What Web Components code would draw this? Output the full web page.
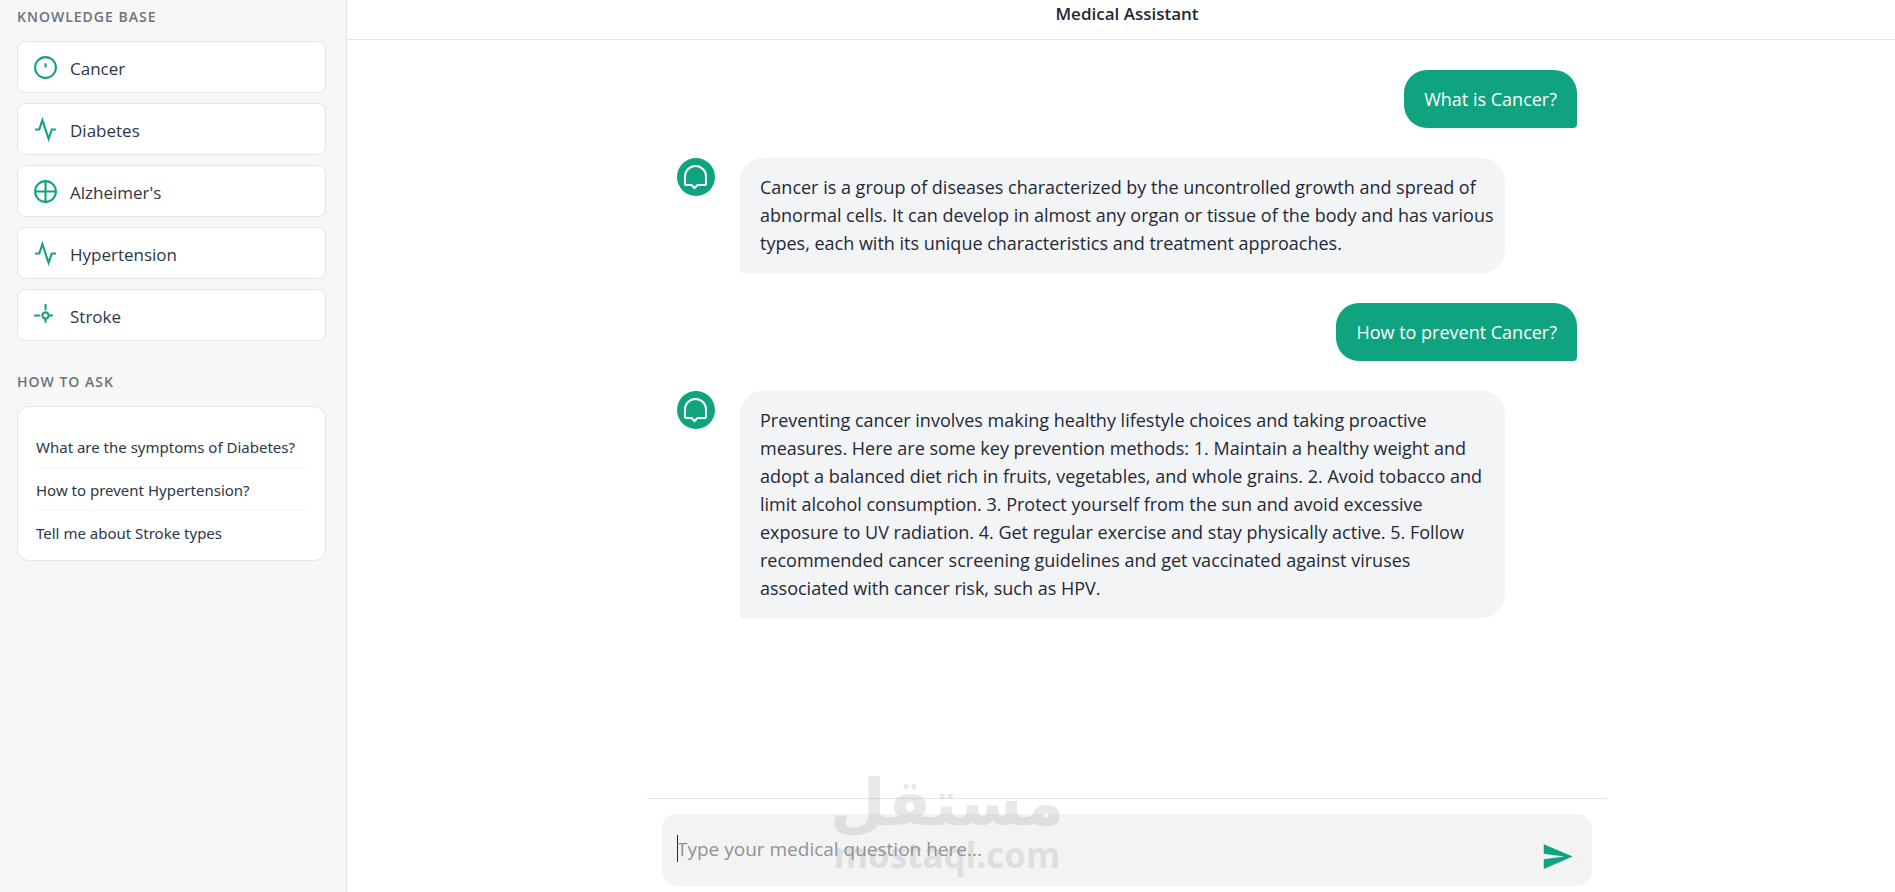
<!DOCTYPE html>
<html lang="en">
<head>
<meta charset="utf-8">
<meta name="viewport" content="width=device-width, initial-scale=1">
<title>Medical Assistant</title>
<style>
  :root {
    --accent: #10a37f;
    --line: #e5e5e5;
    --ink: #1f2937;
    --ink-soft: #2d3748;
    --muted: #6b7280;
  }

  body {
    margin: 0;
    color: var(--ink);
    font-family: "Segoe UI", "Open Sans", "Noto Sans", sans-serif;
  }
</style>
</head>
<body>
<medical-app>
  <side-bar slot="sidebar">
    <side-section heading="Knowledge Base">
      <topic-button icon="circle">Cancer</topic-button>
      <topic-button icon="pulse">Diabetes</topic-button>
      <topic-button icon="globe">Alzheimer's</topic-button>
      <topic-button icon="pulse">Hypertension</topic-button>
      <topic-button icon="node">Stroke</topic-button>
    </side-section>
    <side-section heading="How to Ask">
      <example-list>
        <example-question>What are the symptoms of Diabetes?</example-question>
        <example-question>How to prevent Hypertension?</example-question>
        <example-question>Tell me about Stroke types</example-question>
      </example-list>
    </side-section>
  </side-bar>

  <chat-header slot="header">Medical Assistant</chat-header>

  <chat-message from="user">What is Cancer?</chat-message>
  <chat-message from="assistant">Cancer is a group of diseases characterized by the uncontrolled growth and spread of abnormal cells. It can develop in almost any organ or tissue of the body and has various types, each with its unique characteristics and treatment approaches.</chat-message>
  <chat-message from="user">How to prevent Cancer?</chat-message>
  <chat-message from="assistant">Preventing cancer involves making healthy lifestyle choices and taking proactive measures. Here are some key prevention methods: 1. Maintain a healthy weight and adopt a balanced diet rich in fruits, vegetables, and whole grains. 2. Avoid tobacco and limit alcohol consumption. 3. Protect yourself from the sun and avoid excessive exposure to UV radiation. 4. Get regular exercise and stay physically active. 5. Follow recommended cancer screening guidelines and get vaccinated against viruses associated with cancer risk, such as HPV.</chat-message>

  <chat-composer slot="composer"></chat-composer>
</medical-app>
<water-mark></water-mark>

<script>
const icons = {
  circle: `<circle cx="12" cy="12" r="10"/><path d="M12 8v4"/>`,
  pulse: `<path d="M22 12h-4l-3 9L9 3l-3 9H2"/>`,
  globe: `<circle cx="12" cy="12" r="10"/><path d="M2 12h20M12 2v20"/>`,
  node: `<path d="M12 1v6M1 12h6M12 15v4M15 12h4"/><circle cx="12" cy="12" r="3"/>`,
}

class BaseElement extends HTMLElement {
  constructor() {
    super()
    this.attachShadow({ mode: "open" })
  }

  connectedCallback() {
    this.shadowRoot.innerHTML = `<style>* { box-sizing: border-box; }</style>${this.template()}`
  }
}

class MedicalApp extends BaseElement {
  template() {
    return `<style>
    :host { display: flex; height: 100vh; overflow: hidden; }
    main { flex: 1; min-width: 0; display: flex; flex-direction: column; }
    .column {
      flex: 1;
      min-height: 0;
      display: flex;
      flex-direction: column;
      align-items: center;
      padding-left: 12px;
    }
    .messages {
      flex: 1;
      width: 100%;
      max-width: 960px;
      padding: 30px;
      display: flex;
      flex-direction: column;
      gap: 30px;
    }
    ::slotted([slot="composer"]) { width: 100%; max-width: 960px; }
    </style>
    <slot name="sidebar"></slot>
    <main>
      <slot name="header"></slot>
      <div class="column">
        <div class="messages"><slot></slot></div>
        <slot name="composer"></slot>
      </div>
    </main>`
  }
}

class SideBar extends BaseElement {
  template() {
    return `<style>
    :host {
      box-sizing: border-box;
      flex: none;
      display: flex;
      flex-direction: column;
      gap: 31px;
      width: 347px;
      padding: 7px 20px 20px 17px;
      background: #f7f7f7;
      border-right: 1px solid var(--line);
    }
    </style><slot></slot>`
  }
}

class SideSection extends BaseElement {
  template() {
    return `<style>
    h2 {
      margin: 0 0 14px;
      font-size: 14px;
      line-height: 20px;
      font-weight: 600;
      letter-spacing: 1px;
      text-transform: uppercase;
      color: var(--muted);
    }
    div { display: flex; flex-direction: column; gap: 10px; }
    </style>
    <section>
      <h2>${this.getAttribute("heading")}</h2>
      <div><slot></slot></div>
    </section>`
  }
}

class TopicButton extends BaseElement {
  template() {
    return `<style>
    button {
      display: flex;
      align-items: center;
      gap: 12px;
      width: 100%;
      height: 52px;
      padding: 0 15px;
      border: 1px solid var(--line);
      border-radius: 8px;
      background: #fff;
      color: var(--ink-soft);
      font: inherit;
      font-size: 17px;
      cursor: pointer;
    }
    svg { fill: none; stroke: var(--accent); stroke-width: 2; }
    span { padding-top: 2px; }
    </style>
    <button type="button">
      <svg width="25" height="25" viewBox="0 0 24 24" aria-hidden="true">${icons[this.getAttribute("icon")]}</svg>
      <span><slot></slot></span>
    </button>`
  }
}

class ExampleList extends BaseElement {
  template() {
    return `<style>
    :host {
      display: block;
      padding: 18px 17px 7px 18px;
      border: 1px solid var(--line);
      border-radius: 12px;
      background: #fff;
    }
    </style><slot></slot>`
  }
}

class ExampleQuestion extends BaseElement {
  template() {
    return `<style>
    :host { display: block; border-bottom: 1px solid #f3f4f6; }
    :host(:last-child) { border-bottom: 0; }
    button {
      display: block;
      width: 100%;
      height: 42px;
      padding: 2px 0 0;
      border: 0;
      background: none;
      color: var(--ink-soft);
      font-family: "Segoe UI", "Noto Sans", sans-serif;
      font-size: 15px;
      text-align: left;
      white-space: nowrap;
      cursor: pointer;
    }
    </style>
    <button type="button"><slot></slot></button>`
  }
}

class ChatHeader extends BaseElement {
  template() {
    return `<style>
    :host { display: block; padding: 0 0 11px 12px; border-bottom: 1px solid var(--line); }
    h1 { margin: 0; font-size: 17px; line-height: 28px; font-weight: 600; text-align: center; }
    </style>
    <header><h1><slot></slot></h1></header>`
  }
}

class ChatMessage extends BaseElement {
  get avatar() {
    if (this.getAttribute("from") === "user") return ""
    return `<svg width="38" height="38" viewBox="0 0 38 38" aria-hidden="true">
      <circle cx="19" cy="19" r="19"/>
      <path d="M8 18.500a10.500 10.500 0 0 1 21 0V26q0 1-1 1H20.500L17.500 30 14.500 27H9q-1 0-1-1Z"/>
    </svg>`
  }

  template() {
    return `<style>
    :host { display: flex; gap: 25px; align-items: flex-start; }
    :host([from="user"]) { justify-content: flex-end; }
    svg { flex: none; }
    circle { fill: var(--accent); }
    path { fill: none; stroke: #fff; stroke-width: 2; }
    p {
      max-width: 765px;
      margin: 0;
      padding: 15px 10px 16px 20px;
      border-radius: 23px 23px 23px 4px;
      background: #f3f4f6;
      font-size: 18px;
      line-height: 28px;
    }
    :host([from="user"]) p {
      padding: 15px 20px;
      border-radius: 23px 23px 4px 23px;
      background: var(--accent);
      color: #fff;
    }
    </style>
    ${this.avatar}
    <p><slot></slot></p>`
  }
}

class ChatComposer extends BaseElement {
  template() {
    return `<style>
    :host {
      box-sizing: border-box;
      display: block;
      padding: 15px 15px 6px;
      border-top: 1px solid var(--line);
    }
    form {
      display: flex;
      align-items: center;
      height: 72px;
      padding: 0 18px 0 15px;
      border-radius: 15px;
      background: #f3f3f3;
    }
    input {
      flex: 1;
      min-width: 0;
      padding: 0 0 2px;
      border: 0;
      outline: 0;
      background: none;
      color: var(--ink);
      caret-color: transparent;
      font: inherit;
      font-size: 19px;
      line-height: 28px;
    }
    input::placeholder { color: #8e9299; opacity: 1; }
    .caret { width: 1px; height: 27px; margin: 0 -1px 4px 0; background: #1f2347; }
    button { align-self: flex-end; height: 60px; padding: 0; border: 0; background: none; cursor: pointer; }
    svg { display: block; fill: var(--accent); }
    </style>
    <form>
      <span class="caret"></span>
      <input type="text" aria-label="Medical question" placeholder="Type your medical question here...">
      <button type="submit" aria-label="Send">
        <svg width="33" height="33" viewBox="0 0 24 24" aria-hidden="true"><path d="M2.010 21L23 12 2.010 3 2 10l15 2-15 2z"/></svg>
      </button>
    </form>`
  }
}

class WaterMark extends BaseElement {
  template() {
    return `<style>
    :host {
      position: absolute;
      left: 833px;
      bottom: 15px;
      width: 228px;
      display: flex;
      flex-direction: column;
      align-items: center;
      color: #999;
      opacity: .22;
      pointer-events: none;
      font-weight: 700;
    }
    span { white-space: nowrap; }
    [lang] { font-family: "DejaVu Sans", sans-serif; font-size: 64px; line-height: 60px; }
    .domain { font-size: 35px; line-height: 44px; }
    </style>
    <span lang="ar" dir="rtl">مستقل</span>
    <span class="domain">mostaql.com</span>`
  }
}

customElements.define("medical-app", MedicalApp)
customElements.define("side-bar", SideBar)
customElements.define("side-section", SideSection)
customElements.define("topic-button", TopicButton)
customElements.define("example-list", ExampleList)
customElements.define("example-question", ExampleQuestion)
customElements.define("chat-header", ChatHeader)
customElements.define("chat-message", ChatMessage)
customElements.define("chat-composer", ChatComposer)
customElements.define("water-mark", WaterMark)
</script>
</body>
</html>
